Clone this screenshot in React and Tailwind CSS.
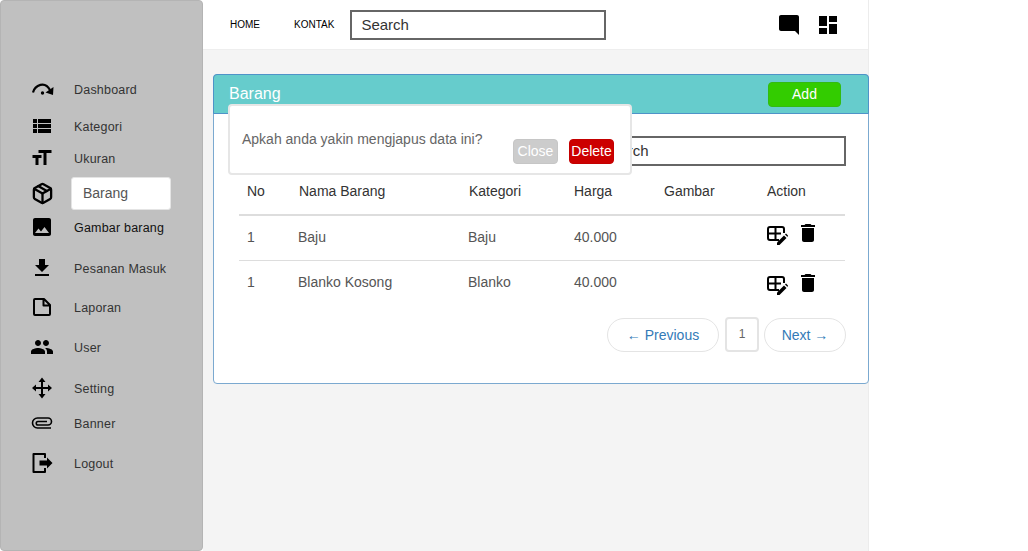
import React from 'react';
import {
  MdViewList,
  MdTextFields,
  MdImage,
  MdFileDownload,
  MdPeople,
  MdModeComment,
  MdDashboard,
  MdDelete,
} from 'react-icons/md';
import { Package } from 'lucide-react';

function GaugeIcon() {
  return (
    <svg width="24" height="24" viewBox="0 0 24 24" fill="none">
      <path d="M3 15.5 C5 8 15 3.5 20 13" stroke="black" strokeWidth="2.2" />
      <path d="M23.5 10 L23 18 L15.5 15.5 Z" fill="black" />
      <circle cx="12.5" cy="16" r="1.7" fill="black" />
    </svg>
  );
}

function FileIcon() {
  return (
    <svg width="24" height="24" viewBox="0 0 24 24" fill="none">
      <path
        d="M5 4 H14 L20 10 V19 Q20 20 19 20 H5 Q4 20 4 19 V5 Q4 4 5 4 Z M13.5 4 V10.5 H20"
        stroke="black"
        strokeWidth="2"
        strokeLinejoin="round"
      />
    </svg>
  );
}

function MoveIcon() {
  return (
    <svg width="24" height="24" viewBox="0 0 24 24" fill="none">
      <path d="M12 5 V19 M5 12 H19" stroke="black" strokeWidth="2" />
      <path d="M12 1.5 L15.5 6 H8.5 Z M12 22.5 L8.5 18 H15.5 Z M2 12 L6 8.5 V15.5 Z M22 12 L18 15.5 V8.5 Z" fill="black" />
    </svg>
  );
}

function ClipIcon() {
  return (
    <svg width="24" height="24" viewBox="0 0 24 24" fill="none">
      <path
        d="M21 17 H7.5 A5 5 0 0 1 7.5 7 H18 A3.5 3.5 0 0 1 18 14 H8 A1.75 1.75 0 0 1 8 10.5 H17"
        stroke="black"
        strokeWidth="1.6"
      />
    </svg>
  );
}

function LogoutIcon() {
  return (
    <svg width="24" height="24" viewBox="0 0 24 24" fill="none">
      <path d="M15 7 V3 H3.5 V21 H15 V17" stroke="black" strokeWidth="2" strokeLinejoin="round" />
      <path d="M9.5 9.5 H17 V6.5 L22.5 12 L17 17.5 V14.5 H9.5 Z" fill="black" />
    </svg>
  );
}

function TableEditIcon() {
  return (
    <svg width="21" height="19" viewBox="0 0 21 19" fill="none" className="shrink-0">
      <path d="M12 14 H3 Q1 14 1 12 V3 Q1 1 3 1 H15 Q17 1 17 3 V7" stroke="black" strokeWidth="2" />
      <path d="M1 7.5 H14 M8.5 1 V14" stroke="black" strokeWidth="2" />
      <path d="M10 19 V16.5 L17 9.5 L19.5 12 L12.5 19 Z" fill="black" />
      <path d="M18 8.5 L19 7.5 L21 9.5 L20.5 11 Z" fill="black" />
    </svg>
  );
}

const menu = [
  { label: 'Dashboard', icon: <GaugeIcon />, gap: 'mt-[77px]' },
  { label: 'Kategori', icon: <MdViewList size={24} />, gap: 'mt-[13px]' },
  { label: 'Ukuran', icon: <MdTextFields size={24} className="-scale-x-100" />, gap: 'mt-[8px]' },
  { label: 'Barang', icon: <Package size={23} strokeWidth={2.4} />, gap: 'mt-[11px]', active: true },
  { label: 'Gambar barang', icon: <MdImage size={24} />, gap: 'mt-[10px]', dark: true },
  { label: 'Pesanan Masuk', icon: <MdFileDownload size={24} />, gap: 'mt-[17px]' },
  { label: 'Laporan', icon: <FileIcon />, gap: 'mt-[15px]' },
  { label: 'User', icon: <MdPeople size={24} />, gap: 'mt-[16px]' },
  { label: 'Setting', icon: <MoveIcon />, gap: 'mt-[17px]' },
  { label: 'Banner', icon: <ClipIcon />, gap: 'mt-[11px]' },
  { label: 'Logout', icon: <LogoutIcon />, gap: 'mt-[16px]' },
];

const rows = [
  { no: 1, name: 'Baju', category: 'Baju', price: '40.000', iconGap: '-mt-[4px]' },
  { no: 1, name: 'Blanko Kosong', category: 'Blanko', price: '40.000', iconGap: 'mt-[6px]' },
];

export default function App() {
  return (
    <div className="flex h-[551px] w-[1028px] overflow-hidden bg-white font-['Liberation_Sans',Arial,sans-serif] text-[#333]">
      <aside className="flex h-full w-[203px] shrink-0 flex-col rounded-[4px] border border-[#b4b4b4] bg-[#c0c0c0]">
        {menu.map((item) => (
          <div key={item.label} className={`flex h-[24px] items-center ${item.gap}`}>
            <span className="flex w-[73px] shrink-0 justify-center pb-[2px] pl-[9px] text-black">{item.icon}</span>
            {item.active ? (
              <span className="-ml-[3px] mb-[2px] flex h-[33px] w-[100px] items-center rounded-[3px] border border-[#e4e4e4] bg-white pl-[11px] text-[14px] text-[#555]">
                {item.label}
              </span>
            ) : (
              <span className={`text-[12.5px] tracking-[0.2px] ${item.dark ? 'text-[#111]' : 'text-[#333]'}`}>
                {item.label}
              </span>
            )}
          </div>
        ))}
      </aside>

      <main className="flex h-full w-[666px] shrink-0 flex-col border-r border-[#ececec] bg-[#f4f4f4]">
        <header className="flex h-[50px] shrink-0 items-center border-b border-[#eeeeee] bg-white">
          <a className="ml-[27px] text-[10px] text-black">HOME</a>
          <a className="ml-[34px] text-[10px] text-black">KONTAK</a>
          <div className="ml-[16px] flex h-[30px] w-[256px] items-center border-2 border-[#666] pl-[9px] pt-[1px] text-[15px] text-[#333]">
            Search
          </div>
          <MdModeComment size={24} className="ml-[171px] text-black" />
          <MdDashboard size={24} className="ml-[15px] text-black" />
        </header>

        <section className="relative mt-[24px] ml-[10px] flex h-[310px] w-[656px] flex-col rounded-[4px] border border-[#7ba9d0] bg-white">
          <div className="-m-[1px] flex h-[40px] items-center justify-between rounded-t-[4px] border border-[#4f93c8] bg-[#66cccc] pl-[15px] pr-[27px]">
            <span className="text-[16px] text-white">Barang</span>
            <button className="h-[25px] w-[73px] rounded-[4px] border border-[#33bb11] bg-[#33cc00] pt-[1px] text-[14px] text-white">
              Add
            </button>
          </div>

          <div className="mt-[23px] flex justify-end pr-[22px]">
            <div className="flex h-[30px] w-[256px] items-center border-2 border-[#666] pl-[9px] text-[15px] text-[#333]">
              Search
            </div>
          </div>

          <table className="ml-[25px] mt-[4px] w-[606px] table-fixed border-collapse text-left text-[14px]">
            <colgroup>
              <col className="w-[51px]" />
              <col className="w-[170px]" />
              <col className="w-[106px]" />
              <col className="w-[90px]" />
              <col className="w-[102px]" />
              <col className="w-[87px]" />
            </colgroup>
            <thead>
              <tr className="h-[45px] border-b-2 border-[#dddddd]">
                <th className="pb-[2px] pl-2 font-normal">No</th>
                <th className="pb-[2px] pl-[9px] font-normal">Nama Barang</th>
                <th className="pb-[2px] pl-[9px] font-normal">Kategori</th>
                <th className="pb-[2px] pl-2 font-normal">Harga</th>
                <th className="pb-[2px] pl-2 font-normal">Gambar</th>
                <th className="pb-[2px] pl-[9px] font-normal">Action</th>
              </tr>
            </thead>
            <tbody>
              {rows.map((row) => (
                <tr key={row.name} className="h-[45px] border-b border-[#dddddd] last:border-b-0 text-[#555]">
                  <td className="pl-2">{row.no}</td>
                  <td className="pl-2">{row.name}</td>
                  <td className="pl-2">{row.category}</td>
                  <td className="pl-2">{row.price}</td>
                  <td className="pl-2" />
                  <td className="pl-[9px]">
                    <div className={`flex items-center gap-[9px] text-black ${row.iconGap}`}>
                      <TableEditIcon />
                      <MdDelete size={24} className="-mt-[6px] -ml-[1px]" />
                    </div>
                  </td>
                </tr>
              ))}
            </tbody>
          </table>

          <div className="mt-[12px] flex items-start justify-end pr-[22px] text-[14px] text-[#337ab7]">
            <a className="mt-[1px] flex h-[34px] w-[112px] items-center justify-center rounded-full border border-[#e4e4e4]">
              ← Previous
            </a>
            <span className="ml-[6px] flex h-[35px] w-[34px] items-center justify-center rounded-[4px] border-2 border-[#e4e4e4] pb-[1px] text-[12px] text-[#666]">
              1
            </span>
            <a className="ml-[5px] mt-[1px] flex h-[34px] w-[82px] items-center justify-center rounded-full border border-[#e4e4e4]">
              Next →
            </a>
          </div>

          <div className="absolute left-[14px] top-[29px] flex h-[71px] w-[404px] justify-between rounded-[4px] border-2 border-[#e6e6e6] bg-white pl-[12px] pr-[16px]">
            <p className="mt-[23px] text-[14px] text-[#666]">Apkah anda yakin mengjapus data ini?</p>
            <div className="mt-[33px] flex h-[25px] gap-[11px] text-[14px] text-white">
              <button className="w-[45px] rounded-[4px] border border-[#c6c6c6] bg-[#cccccc]">Close</button>
              <button className="w-[45px] rounded-[4px] border border-[#c40000] bg-[#cc0000]">Delete</button>
            </div>
          </div>
        </section>
      </main>
    </div>
  );
}
